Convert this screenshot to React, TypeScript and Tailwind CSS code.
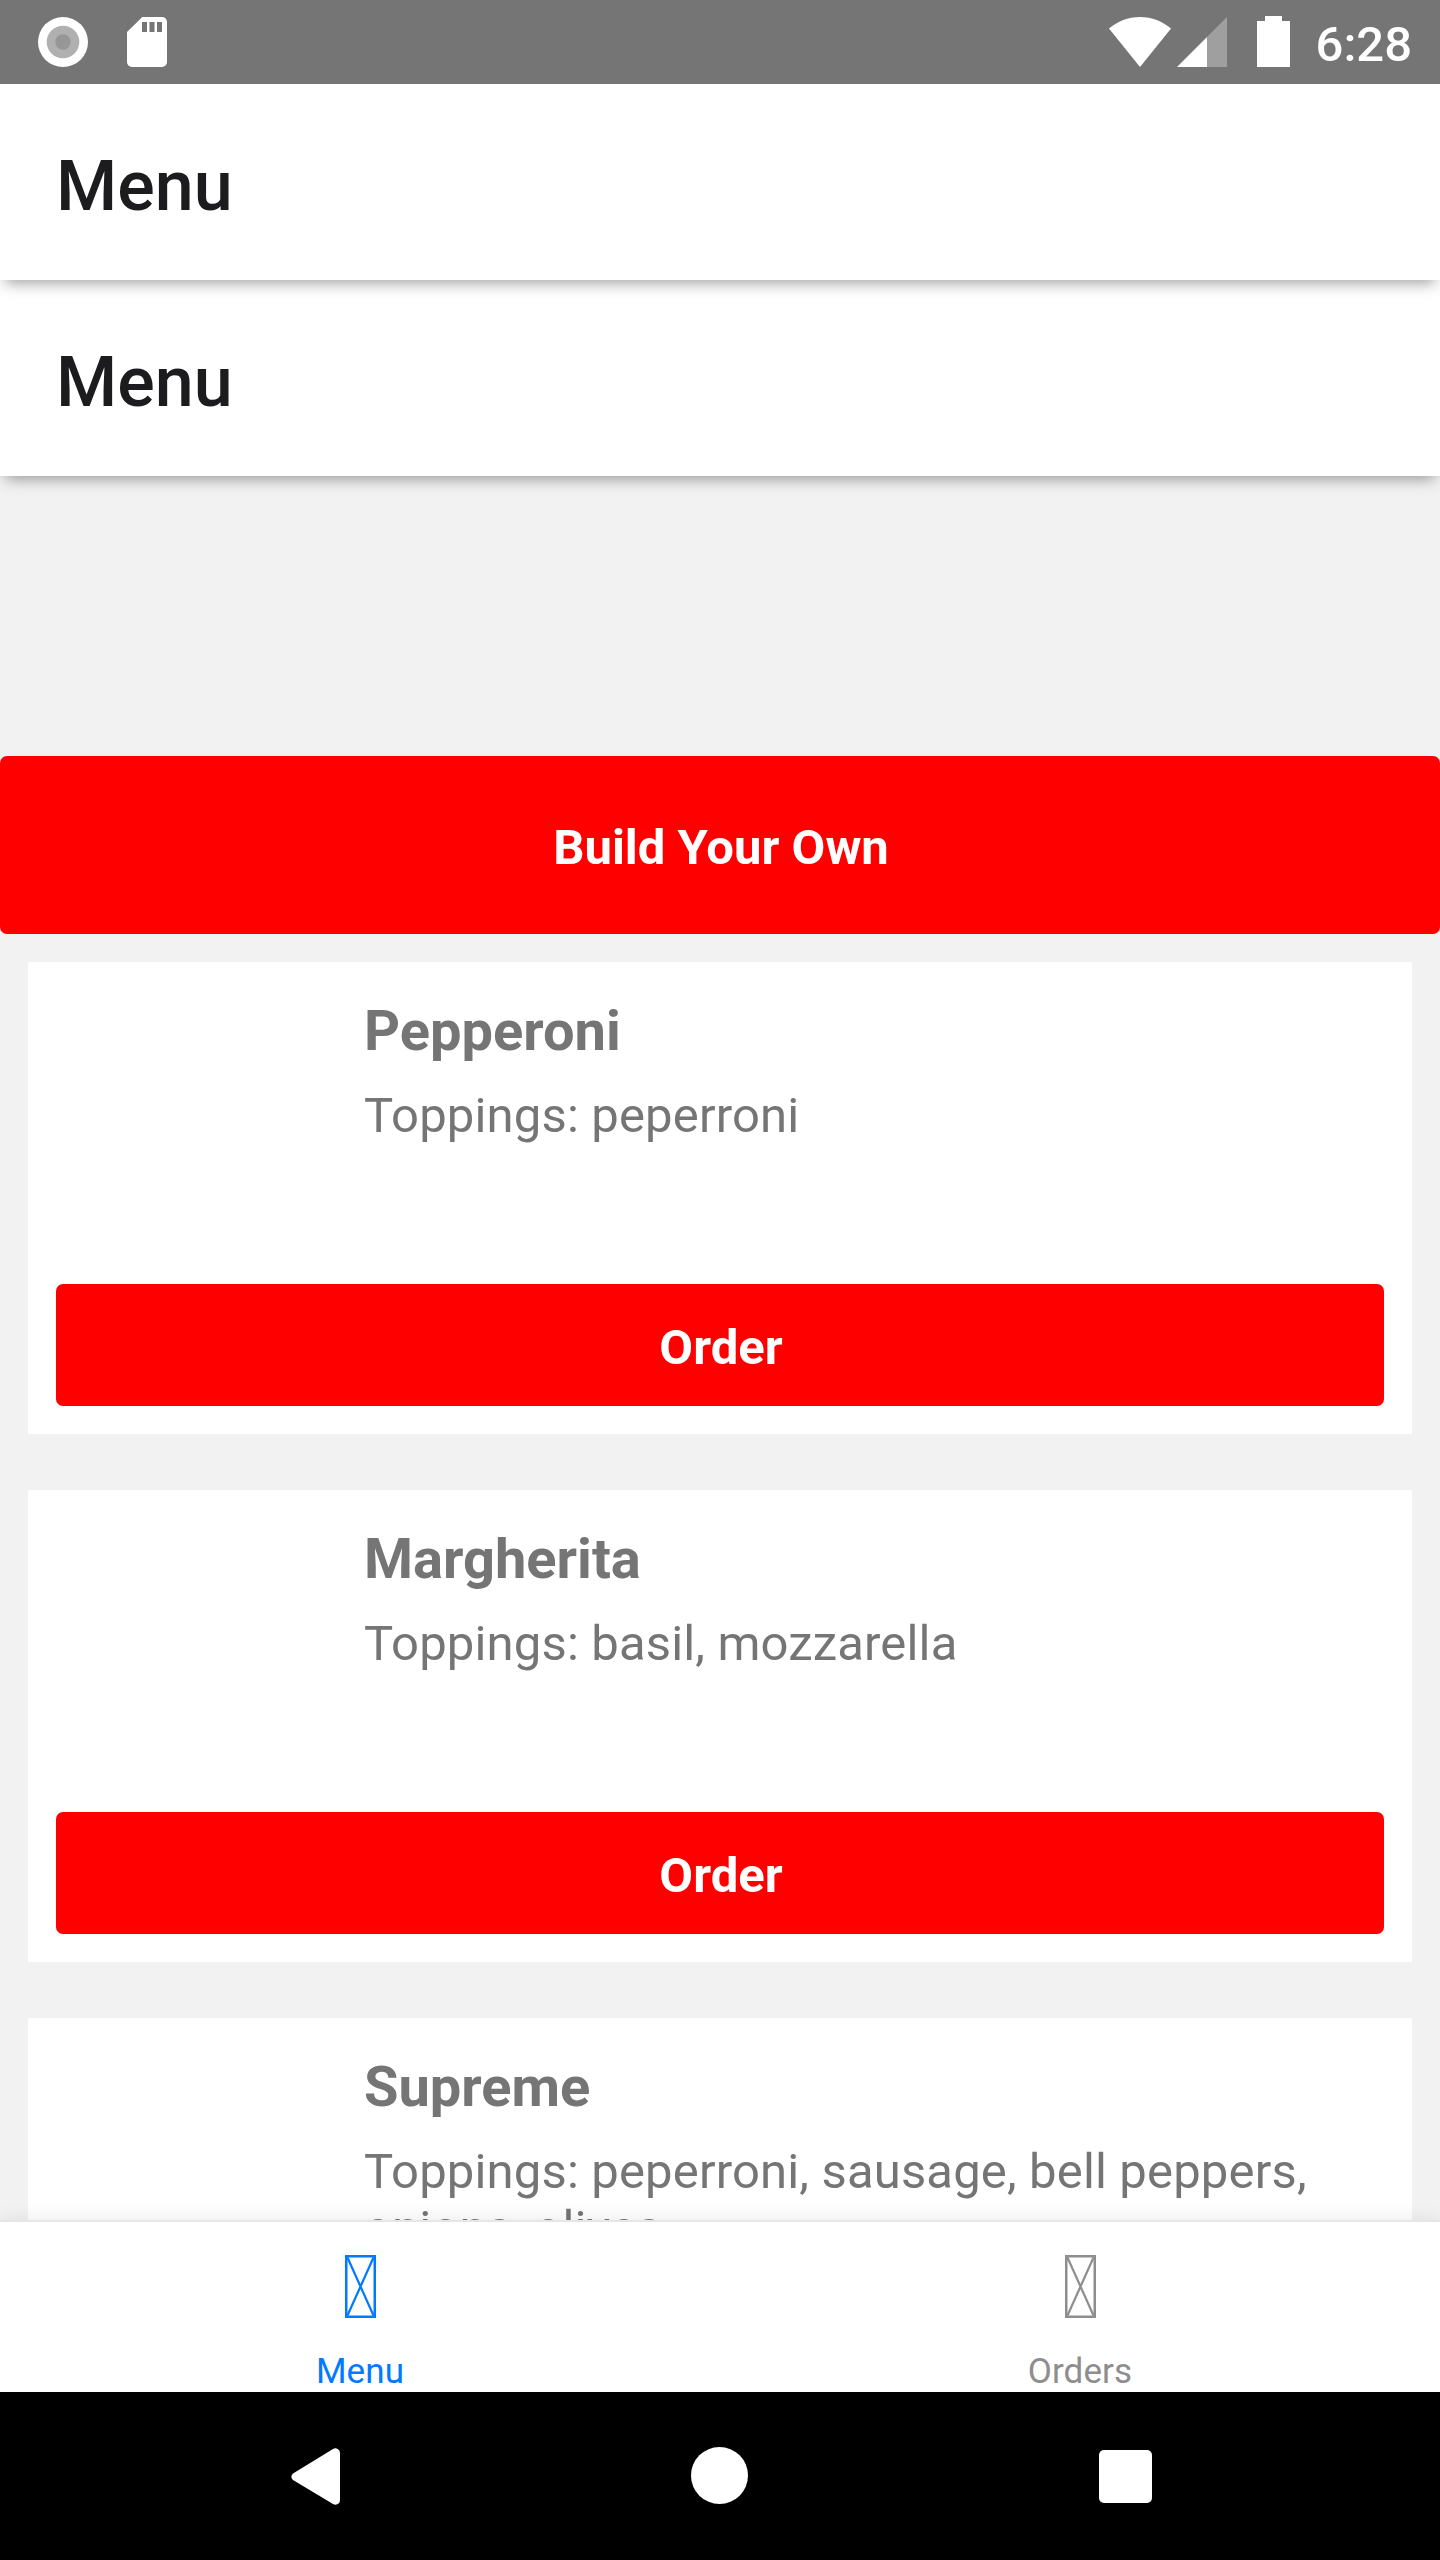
const pizzas = [
  { name: 'Pepperoni', toppings: 'peperroni' },
  { name: 'Margherita', toppings: 'basil, mozzarella' },
  { name: 'Supreme', toppings: 'peperroni, sausage, bell peppers, onions, olives' },
];

function StatusBar() {
  return (
    <div className="relative z-30 flex h-[84px] shrink-0 items-start bg-[#757575] pt-4 pr-7 pl-[38px] text-white">
      <svg className="mt-px h-[50px] w-[50px]" viewBox="0 0 50 50">
        <circle cx="25" cy="25" r="25" fill="#fff" />
        <circle cx="25" cy="25" r="16.3" fill="#b0b0b0" />
        <circle cx="25" cy="25" r="7.7" fill="#979797" />
      </svg>
      <svg className="mt-px ml-[39px] h-[50px] w-10" viewBox="0 0 40 50">
        <path d="M15.3 0H35a5 5 0 0 1 5 5v40a5 5 0 0 1-5 5H5a5 5 0 0 1-5-5V15z" fill="#fff" />
        <path d="M15 5h5v10h-5zM22.5 5h5v10h-5zM30 5h5v10h-5z" fill="#757575" />
      </svg>
      <svg className="mt-px ml-auto h-[50px] w-[62px]" viewBox="0 0 62 50">
        <path d="M31 50 0 11.4C8.5 4.5 19 0 31 0s22.5 4.5 31 11.4z" fill="#fff" />
      </svg>
      <svg className="mt-px ml-[6px] h-[50px] w-[50px]" viewBox="0 0 50 50">
        <path d="M50 0v50H30V20z" fill="#9f9f9f" />
        <path d="M30 20v30H0z" fill="#fff" />
      </svg>
      <svg className="ml-[30px] h-[51px] w-[33px]" viewBox="0 0 33 51">
        <path d="M8 0h17v5h8v46H0V5h8z" fill="#fff" />
      </svg>
      <span className="ml-[26px] text-[49px] leading-[58px] font-medium">6:28</span>
    </div>
  );
}

function Header({ layer }: { layer: string }) {
  return (
    <header
      className={`relative h-[196px] shrink-0 bg-white pt-[61px] pl-14 text-[70px] leading-[82px] font-medium text-[#1c1c1e] shadow-[0_8px_14px_-5px_rgba(0,0,0,0.38)] ${layer}`}
    >
      Menu
    </header>
  );
}

function PizzaCard({ name, toppings }: { name: string; toppings: string }) {
  return (
    <article className="mx-7 flex h-[472px] shrink-0 flex-col bg-white p-7">
      <div className="flex flex-1 pl-[308px] text-[#757575]">
        <div className="pt-2">
          <h2 className="text-[56px] leading-[66px] font-bold">{name}</h2>
          <p className="mt-[23px] text-[49px] leading-[57px] tracking-[0.16px]">Toppings: {toppings}</p>
        </div>
      </div>
      <button className="h-[122px] shrink-0 rounded-[7px] bg-[#ff0000] pt-[5px] pl-[2px] text-[49px] leading-[58px] font-bold text-white">
        Order
      </button>
    </article>
  );
}

function Tab({ label, color }: { label: string; color: string }) {
  return (
    <div className={`flex flex-1 flex-col items-center ${color}`}>
      <svg className="mt-[33px] h-[63px] w-[31px]" viewBox="0 0 31 63" fill="none" stroke="currentColor">
        <rect x="1.25" y="1.25" width="28.5" height="60.5" strokeWidth="2.5" />
        <path d="M2.5 2.5l26 58M28.5 2.5l-26 58" strokeWidth="2.2" />
      </svg>
      <span className="mt-[33px] text-[35px] leading-[41px] tracking-[0.1px]">{label}</span>
    </div>
  );
}

export default function App() {
  return (
    <div
      className="flex h-[2560px] w-[1440px] flex-col overflow-hidden bg-[#f2f2f2]"
      style={{ fontFamily: 'Roboto, sans-serif' }}
    >
      <StatusBar />
      <Header layer="z-20" />
      <Header layer="z-10" />
      <main className="flex min-h-0 flex-1 flex-col overflow-hidden pt-[280px]">
        <button className="h-[178px] shrink-0 rounded-[7px] bg-[#ff0000] pt-[5px] pl-[2px] text-[49px] leading-[58px] font-bold text-white">
          Build Your Own
        </button>
        <div className="flex flex-col gap-14 pt-7">
          {pizzas.map((p) => (
            <PizzaCard key={p.name} {...p} />
          ))}
        </div>
      </main>
      <nav className="relative flex h-[172px] shrink-0 border-t-2 border-[#e6e6e6] bg-white shadow-[0_0_20px_rgba(0,0,0,0.09)]">
        <Tab label="Menu" color="text-[#007aff]" />
        <Tab label="Orders" color="text-[#8e8e8e]" />
      </nav>
      <div className="relative flex h-[168px] shrink-0 items-start bg-black pl-[291px]">
        <svg className="mt-14 h-[57px] w-[49px]" viewBox="0 0 49 57">
          <path d="M2 25.5 42 1a4.6 4.6 0 0 1 7 4v47a4.6 4.6 0 0 1-7 4L2 32a4 4 0 0 1 0-6.5z" fill="#fff" />
        </svg>
        <div className="mt-[55px] ml-[351px] h-[57px] w-[57px] rounded-full bg-white" />
        <div className="mt-[58px] ml-[351px] h-[53px] w-[53px] rounded-[5px] bg-white" />
      </div>
    </div>
  );
}
